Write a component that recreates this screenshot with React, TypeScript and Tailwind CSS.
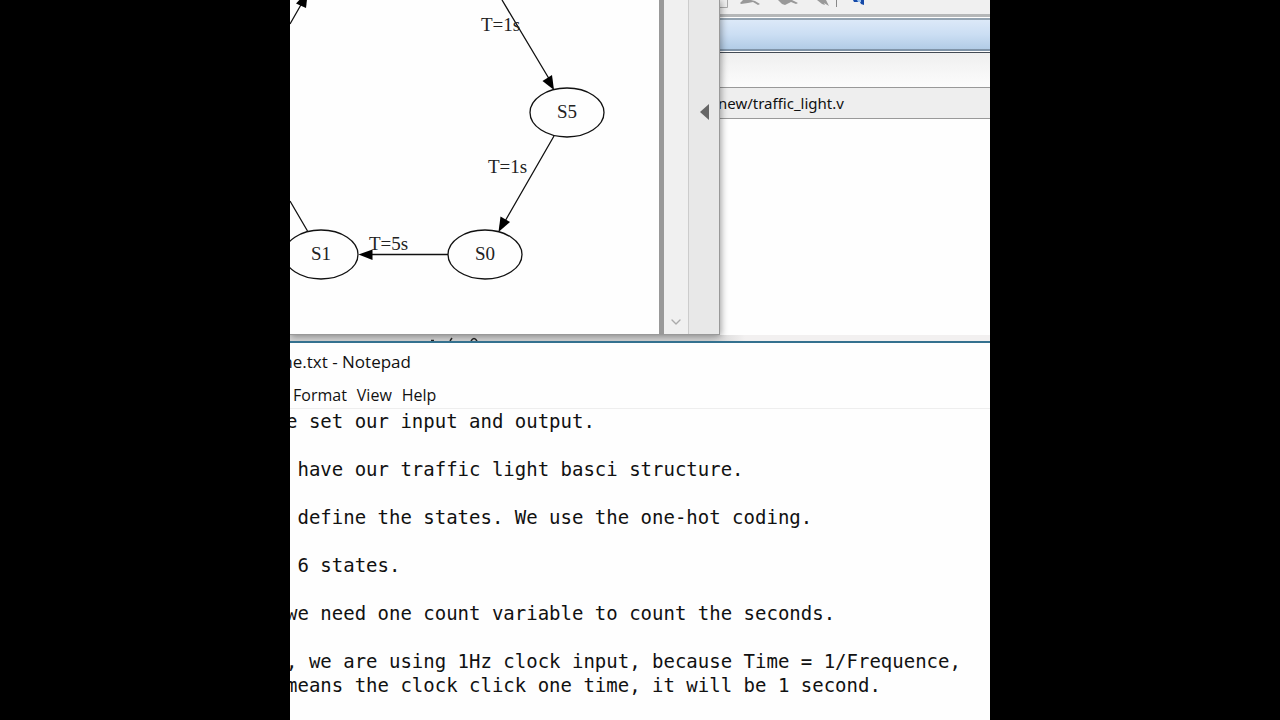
import { ChevronDown } from 'lucide-react'

const notes = `e set our input and output.

 have our traffic light basci structure.

 define the states. We use the one-hot coding.

 6 states.

we need one count variable to count the seconds.

, we are using 1Hz clock input, because Time = 1/Frequence,
means the clock click one time, it will be 1 second.`

const states = [
  { name: 'S5', cx: 277, cy: 112 },
  { name: 'S0', cx: 195, cy: 254 },
  { name: 'S1', cx: 31, cy: 254 },
]

const labels = [
  { text: 'T=1s', x: 191, y: 31 },
  { text: 'T=1s', x: 198, y: 173 },
  { text: 'T=5s', x: 79, y: 250 },
]

function StateDiagram() {
  return (
    <svg className="h-[334px] w-[369px] shrink-0 bg-[#fefefe] font-['Liberation_Serif',serif]" viewBox="0 0 369 334">
      <g stroke="#111" strokeWidth="1.3" fill="none">
        <path d="M0 24L12 3M212 0l49 82M264 136l-50 87M158 254.500H80M0 201l17.500 30" />
        {states.map((s) => (
          <ellipse key={s.name} cx={s.cx} cy={s.cy + 0.5} rx="37" ry="24.5" />
        ))}
      </g>
      <g fill="#000">
        <path d="M6 3.500L18-9l-2 17z" />
        <path d="M264 90l-11.500-9L262 75z" />
        <path d="M208.500 232l2-15.500 9.500 5.500z" />
        <path d="M68.500 254.500l14-5v10.500z" />
      </g>
      <g fill="#222" fontSize="19">
        {labels.map((l) => (
          <text key={l.y} x={l.x} y={l.y}>{l.text}</text>
        ))}
        {states.map((s) => (
          <text key={s.name} x={s.cx} y={s.cy + 6} textAnchor="middle">{s.name}</text>
        ))}
      </g>
    </svg>
  )
}

function DiagramWindow() {
  return (
    <section className="relative z-10 flex w-[430px] shrink-0 border-r border-b border-[#999] bg-[#fefefe] shadow-[1px_1px_7px_rgba(0,0,0,0.4)]">
      <StateDiagram />
      <div className="w-[5px] bg-[#999]" />
      <div className="flex w-6 items-end justify-center bg-[#f0f0f0] pb-1">
        <button aria-label="Scroll down" className="text-[#aaa]">
          <ChevronDown className="h-4 w-4" strokeWidth={2} />
        </button>
      </div>
      <div className="flex flex-1 items-start justify-center border-l border-[#ccc] bg-[#e8e8e8] pt-[104px]">
        <button aria-label="Show panel">
          <svg className="h-4 w-[9px]" viewBox="0 0 9 16">
            <path d="M9 0v16L0 8z" fill="#666" />
          </svg>
        </button>
      </div>
    </section>
  )
}

function EditorWindow() {
  return (
    <section className="flex min-w-0 flex-1 flex-col bg-[#fefefe]">
      <div className="h-[17px] border-b-[3px] border-[#b5b7b8] bg-[#f0f0f0]">
        <svg className="h-3.5 w-[160px]" viewBox="0 0 160 14">
          <path d="M0 7.500h7.500V0" fill="none" stroke="#aaa" />
          <path d="M23 0h8l4 1 5 3-2 1-5-3-5 1-7 1-1-1z" fill="#999" />
          <path d="M58 0h14l6 3-2 1-5-2-6 3-3-1z" fill="#999" />
          <path d="M97 0h9l3 6-5-3 1 2-3-1z" fill="#999" />
          <path d="M116.500 0v7" stroke="#888" />
          <path d="M133 0h11v5l-3-1-1-2h-6z" fill="#1549a8" />
          <path d="M137 0h4v2h-3z" fill="#9cc4f0" />
        </svg>
      </div>
      <div className="mt-px h-[33px] border-t-2 border-b-2 border-t-[#93a3b1] border-b-[#8094a8] bg-linear-to-b from-[#dce9f8] via-[#cbdef3] to-[#b2cce6]" />
      <div className="mt-px h-[35px] border-t border-[#444b55] bg-linear-to-b from-[#efefef] to-[#fcfcfc]" />
      <div className="flex h-8 items-center border-y border-[#999] bg-[#eee]">
        <span className="-ml-0.5 font-['Noto_Sans',sans-serif] text-[15px] whitespace-nowrap text-[#111]">new/traffic_light.v</span>
      </div>
    </section>
  )
}

function Notepad() {
  return (
    <section className="relative z-20 flex flex-1 flex-col border-t-2 border-[#34718f] bg-[#fefefe] font-['Open_Sans',sans-serif] text-base text-[#111]">
      <h1 className="-ml-[13px] flex h-[38px] items-center text-[17px] whitespace-nowrap">me.txt - Notepad</h1>
      <nav className="flex h-7 items-center gap-2.5 border-b border-[#eee] pl-[3px]">
        <button>Format</button>
        <button>View</button>
        <button>Help</button>
      </nav>
      <textarea
        aria-label="Notes"
        defaultValue={notes}
        wrap="off"
        spellCheck={false}
        className="-ml-1 flex-1 resize-none overflow-hidden bg-transparent font-['DejaVu_Sans_Mono',monospace] text-[19px] leading-6 outline-none"
      />
    </section>
  )
}

export default function App() {
  return (
    <div className="flex h-screen justify-center bg-black">
      <main className="flex w-full max-w-[700px] flex-col overflow-hidden bg-[#fefefe]">
        <div className="flex">
          <DiagramWindow />
          <EditorWindow />
        </div>
        <div className="h-1.5 bg-linear-to-r from-[#d2d2d2] from-60% to-[#f2f0f0] to-65%">
          <svg className="relative z-10 ml-[138px] h-1.5 w-[60px]" viewBox="0 0 60 6">
            <path d="M3 5.500h3M22 6l2-3M43 6q3-5 6 0" fill="none" stroke="#222" strokeWidth="1.5" />
          </svg>
        </div>
        <Notepad />
      </main>
    </div>
  )
}
